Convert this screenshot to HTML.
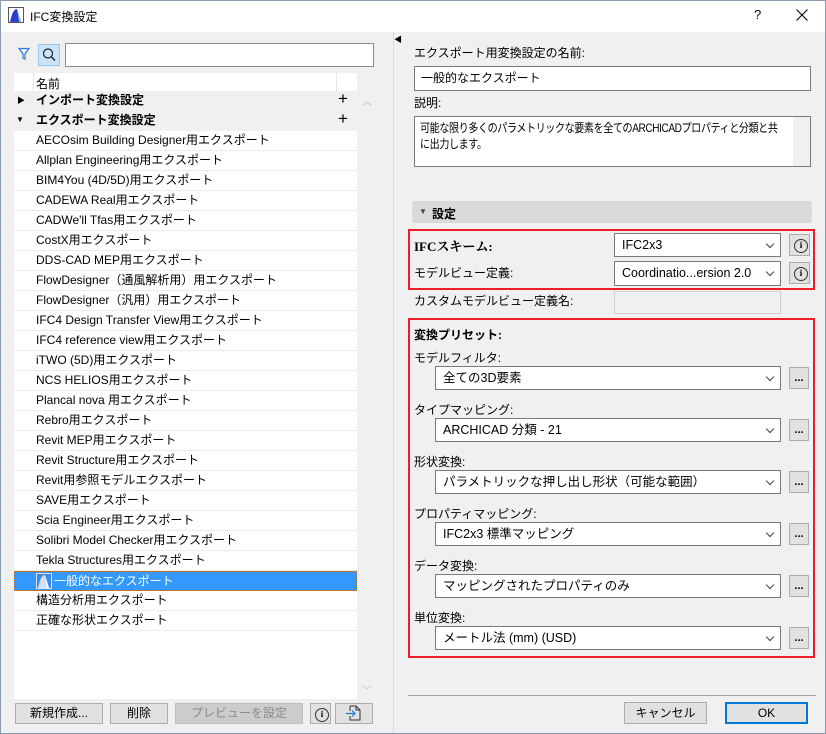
<!DOCTYPE html>
<html><head><meta charset="utf-8"><style>
*{box-sizing:border-box;margin:0;padding:0}
body{width:826px;height:734px;overflow:hidden;background:#f0f0f0;font-family:"Liberation Sans","Noto Sans CJK JP",sans-serif;font-size:12px;color:#000;position:relative}
.a{position:absolute}
.win{position:absolute;left:0;top:0;width:826px;height:734px;border:1px solid #8a9bb0}
.title{left:1px;top:1px;width:824px;height:31px;background:#fff}
.row{position:absolute;left:14px;width:343px;height:20px;line-height:19px;background:#fff;border-bottom:1px solid #ececec;padding-left:22px;white-space:nowrap}
.grp{background:#f0f0f0;font-weight:bold;border:none;padding-left:22px}
.inp{position:absolute;background:#fff;border:1px solid #7a7a7a;padding-left:6px;line-height:22px}
.sel{position:absolute;background:#fff;border:1px solid #7a7a7a;padding-left:7px;line-height:22px;font-size:12.5px}
.sel:after{content:"";position:absolute;right:7px;top:7px;width:5px;height:5px;border-right:1px solid #444;border-bottom:1px solid #444;transform:rotate(45deg)}
.btn{position:absolute;background:#e1e1e1;border:1px solid #adadad;text-align:center;line-height:19px}
.dot{position:absolute;width:20px;height:22px;background:#e1e1e1;border:1px solid #adadad;text-align:center;font-weight:bold;line-height:20px;font-size:11px}
.info{position:absolute;width:21px;height:22px;background:#e1e1e1;border:1px solid #adadad}
.info:before{content:"i";position:absolute;left:4px;top:4px;width:12px;height:12px;border:1px solid #333;border-radius:50%;font-size:9px;line-height:11px;text-align:center;font-weight:bold;font-family:"Liberation Serif",serif}
.red{position:absolute;border:2px solid #ee1c24}
.lbl{position:absolute;white-space:nowrap}
</style></head><body>
<div class="win"></div>
<div class="a title"></div>
<svg class="a" style="left:8px;top:7px" width="16" height="16"><rect x="0.5" y="0.5" width="15" height="15" fill="#fff" stroke="#556"/><path d="M2 15 C4 6 6 2 9 2 L13 15Z" fill="#2a3fd0"/><path d="M9 2 L13 15 L11 15Z" fill="#8fb0ff"/></svg>
<div class="lbl" style="left:30px;top:8px;font-size:12px">IFC変換設定</div>
<div class="lbl" style="left:754px;top:7px;font-size:13px">?</div>
<svg class="a" style="left:796px;top:9px" width="12" height="12"><path d="M0.5 0.5L11.5 11.5M11.5 0.5L0.5 11.5" stroke="#000" stroke-width="1.1"/></svg>

<svg class="a" style="left:18px;top:47px" width="12" height="14"><path d="M1 1.5H11L7 7V12L5 11V7Z" fill="none" stroke="#2b7bd8" stroke-width="1.2"/></svg>
<div class="a" style="left:38px;top:44px;width:22px;height:22px;background:#cce4f7;border:1px solid #99c6ee"></div>
<svg class="a" style="left:41px;top:47px" width="16" height="16"><circle cx="7" cy="6.5" r="4.5" fill="none" stroke="#222" stroke-width="1.2"/><path d="M10.2 9.7L14 13.5" stroke="#222" stroke-width="1.4"/></svg>
<div class="inp" style="left:65px;top:43px;width:309px;height:24px;border-color:#8a8a8a"></div>

<div class="a" style="left:14px;top:73px;width:343px;height:18px;background:#fff"></div>
<div class="a" style="left:33px;top:73px;width:1px;height:18px;background:#e5e5e5"></div>
<div class="a" style="left:336px;top:73px;width:1px;height:18px;background:#e5e5e5"></div>
<div class="lbl" style="left:36px;top:75px">名前</div>
<div class="a" style="left:14px;top:91px;width:343px;height:608px;background:#fff"></div>
<div class="a" style="left:357px;top:91px;width:16px;height:608px;background:#f0f0f0"></div>
<div class="lbl" style="left:362px;top:93px;color:#bbb;font-size:10px">︿</div>
<div class="lbl" style="left:362px;top:682px;color:#bbb;font-size:10px">﹀</div>

<div class="row grp" style="top:91px">インポート変換設定</div>
<div class="lbl" style="left:17px;top:95px;font-size:8px">▶</div>
<div class="lbl" style="left:338px;top:89px;font-size:17px">+</div>
<div class="row grp" style="top:111px">エクスポート変換設定</div>
<div class="lbl" style="left:16px;top:115px;font-size:8px">▼</div>
<div class="lbl" style="left:338px;top:109px;font-size:17px">+</div>

<div class="row" style="top:131px">AECOsim Building Designer用エクスポート</div>
<div class="row" style="top:151px">Allplan Engineering用エクスポート</div>
<div class="row" style="top:171px">BIM4You (4D/5D)用エクスポート</div>
<div class="row" style="top:191px">CADEWA Real用エクスポート</div>
<div class="row" style="top:211px">CADWe'll Tfas用エクスポート</div>
<div class="row" style="top:231px">CostX用エクスポート</div>
<div class="row" style="top:251px">DDS-CAD MEP用エクスポート</div>
<div class="row" style="top:271px">FlowDesigner（通風解析用）用エクスポート</div>
<div class="row" style="top:291px">FlowDesigner（汎用）用エクスポート</div>
<div class="row" style="top:311px">IFC4 Design Transfer View用エクスポート</div>
<div class="row" style="top:331px">IFC4 reference view用エクスポート</div>
<div class="row" style="top:351px">iTWO (5D)用エクスポート</div>
<div class="row" style="top:371px">NCS HELIOS用エクスポート</div>
<div class="row" style="top:391px">Plancal nova 用エクスポート</div>
<div class="row" style="top:411px">Rebro用エクスポート</div>
<div class="row" style="top:431px">Revit MEP用エクスポート</div>
<div class="row" style="top:451px">Revit Structure用エクスポート</div>
<div class="row" style="top:471px">Revit用参照モデルエクスポート</div>
<div class="row" style="top:491px">SAVE用エクスポート</div>
<div class="row" style="top:511px">Scia Engineer用エクスポート</div>
<div class="row" style="top:531px">Solibri Model Checker用エクスポート</div>
<div class="row" style="top:551px">Tekla Structures用エクスポート</div>
<div class="row" style="top:571px;background:#3399ff;color:#fff;padding-left:39px;border:1px dotted #c07020">一般的なエクスポート</div>
<svg class="a" style="left:36px;top:573px" width="16" height="16"><rect x="0.5" y="0.5" width="15" height="15" fill="#3a8ae8" stroke="#dde"/><path d="M2 15 C4 6 6 2 9 2 L13 15Z" fill="#cfe0ff"/><path d="M9 2 L13 15 L11 15Z" fill="#fff"/></svg>
<div class="row" style="top:591px">構造分析用エクスポート</div>
<div class="row" style="top:611px">正確な形状エクスポート</div>

<div class="btn" style="left:15px;top:703px;width:88px;height:21px">新規作成...</div>
<div class="btn" style="left:110px;top:703px;width:58px;height:21px">削除</div>
<div class="btn" style="left:175px;top:703px;width:128px;height:21px;background:#cccccc;border-color:#bfbfbf;color:#8a8a8a">プレビューを設定</div>
<div class="info" style="left:310px;top:703px;width:21px;height:21px"></div>
<div class="btn" style="left:335px;top:703px;width:38px;height:21px"></div>
<svg class="a" style="left:345px;top:705px" width="18" height="17"><path d="M5 1H11L15 5V15H5V11M5 6V1M11 1V5H15" fill="none" stroke="#333"/><path d="M1 8.5H10M7 5.5L10 8.5L7 11.5" fill="none" stroke="#1a7ad8" stroke-width="1.2"/></svg>

<div class="a" style="left:393px;top:32px;width:1px;height:701px;background:#dcdcdc"></div>
<div class="lbl" style="left:394px;top:34px;font-size:8px">◀</div>

<div class="lbl" style="left:414px;top:44px">エクスポート用変換設定の名前:</div>
<div class="inp" style="left:414px;top:66px;width:397px;height:25px">一般的なエクスポート</div>
<div class="lbl" style="left:414px;top:94px">説明:</div>
<div class="inp" style="left:414px;top:116px;width:397px;height:51px;overflow:hidden;padding:0"></div>
<div class="a" style="left:793px;top:117px;width:17px;height:49px;background:#f0f0f0"></div>
<div class="a" style="left:420px;top:120px;line-height:16px;white-space:nowrap;font-size:12px;letter-spacing:-0.5px;transform:scaleX(0.84);transform-origin:left top">可能な限り多くのパラメトリックな要素を全てのARCHICADプロパティと分類と共<br>に出力します。</div>

<div class="a" style="left:412px;top:201px;width:400px;height:22px;background:#d9d9d9;border-radius:3px"></div>
<div class="lbl" style="left:419px;top:207px;font-size:8px;color:#444">▼</div>
<div class="lbl" style="left:432px;top:205px;font-weight:bold">設定</div>

<div class="red" style="left:408px;top:229px;width:407px;height:61px"></div>
<div class="lbl" style="left:414px;top:236px;font-weight:bold;font-family:'Liberation Serif','Noto Serif CJK SC',serif;font-size:13px">IFCスキーム:</div>
<div class="sel" style="left:614px;top:233px;width:167px;height:24px">IFC2x3</div>
<div class="info" style="left:789px;top:234px"></div>
<div class="lbl" style="left:414px;top:264px">モデルビュー定義:</div>
<div class="sel" style="left:614px;top:261px;width:167px;height:25px">Coordinatio...ersion 2.0</div>
<div class="info" style="left:789px;top:262px"></div>
<div class="lbl" style="left:414px;top:292px">カスタムモデルビュー定義名:</div>
<div class="a" style="left:614px;top:291px;width:167px;height:23px;border:1px solid #d0d0d0"></div>

<div class="red" style="left:408px;top:318px;width:407px;height:340px"></div>
<div class="lbl" style="left:414px;top:326px;font-weight:bold">変換プリセット:</div>

<div class="lbl" style="left:414px;top:349px">モデルフィルタ:</div>
<div class="sel" style="left:435px;top:366px;width:346px;height:24px">全ての3D要素</div>
<div class="dot" style="left:789px;top:367px">...</div>
<div class="lbl" style="left:414px;top:401px">タイプマッピング:</div>
<div class="sel" style="left:435px;top:418px;width:346px;height:24px">ARCHICAD 分類 - 21</div>
<div class="dot" style="left:789px;top:419px">...</div>
<div class="lbl" style="left:414px;top:453px">形状変換:</div>
<div class="sel" style="left:435px;top:470px;width:346px;height:24px">パラメトリックな押し出し形状（可能な範囲）</div>
<div class="dot" style="left:789px;top:471px">...</div>
<div class="lbl" style="left:414px;top:505px">プロパティマッピング:</div>
<div class="sel" style="left:435px;top:522px;width:346px;height:24px">IFC2x3 標準マッピング</div>
<div class="dot" style="left:789px;top:523px">...</div>
<div class="lbl" style="left:414px;top:557px">データ変換:</div>
<div class="sel" style="left:435px;top:574px;width:346px;height:24px">マッピングされたプロパティのみ</div>
<div class="dot" style="left:789px;top:575px">...</div>
<div class="lbl" style="left:414px;top:609px">単位変換:</div>
<div class="sel" style="left:435px;top:626px;width:346px;height:24px">メートル法 (mm) (USD)</div>
<div class="dot" style="left:789px;top:627px">...</div>

<div class="a" style="left:408px;top:695px;width:408px;height:1px;background:#a0a0a0"></div>
<div class="btn" style="left:624px;top:702px;width:83px;height:22px;line-height:20px">キャンセル</div>
<div class="btn" style="left:725px;top:702px;width:83px;height:22px;line-height:18px;border:2px solid #0078d7">OK</div>
</body></html>
